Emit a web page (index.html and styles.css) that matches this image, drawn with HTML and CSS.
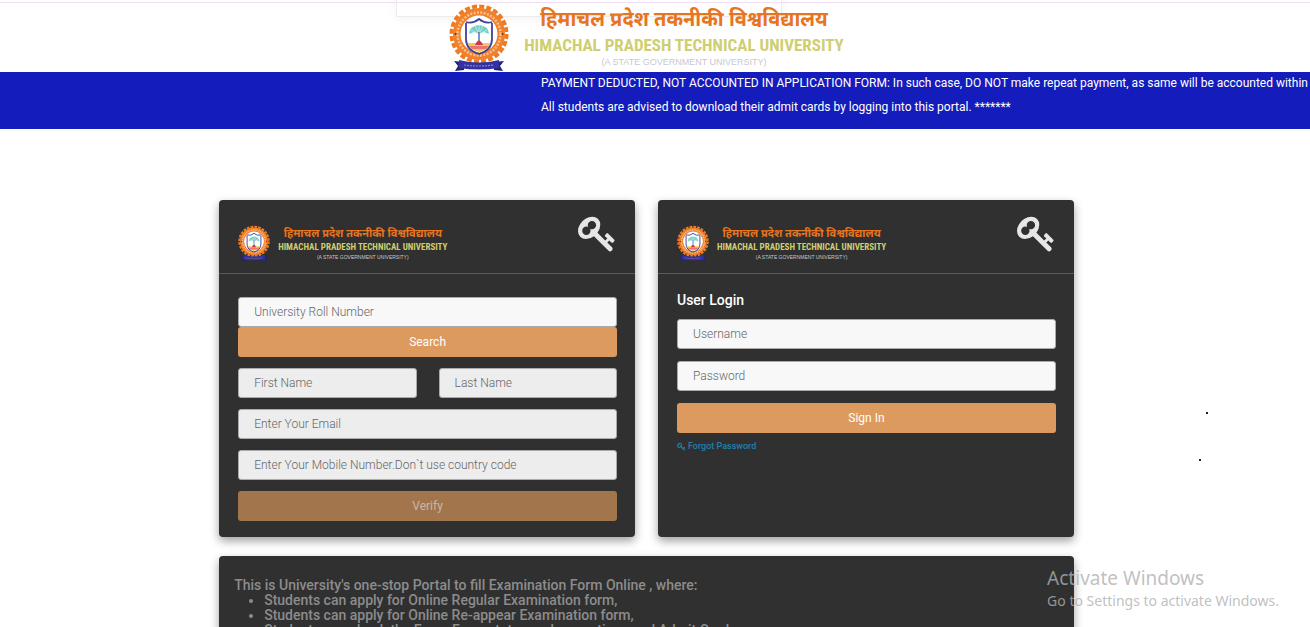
FILE: index.html
```html
<!DOCTYPE html>
<html lang="en">
<head>
<meta charset="utf-8">
<title>Himachal Pradesh Technical University</title>
<link rel="stylesheet" href="styles.css">
</head>
<body>
<svg class="defs" aria-hidden="true">
  <symbol id="seal" viewBox="0 0 60 68">
    <circle cx="30" cy="31" r="27.500" fill="none" stroke="#ef7a22" stroke-width="4" stroke-dasharray="5 2.200"/>
    <circle cx="30" cy="31" r="26" fill="#f0802a"/>
    <circle cx="30" cy="31" r="21.500" fill="none" stroke="#f9c192" stroke-width="2.500" stroke-dasharray="2 1.400"/>
    <circle cx="30" cy="31" r="18.500" fill="#fff"/>
    <circle cx="6.500" cy="31" r="1" fill="#60351a"/><circle cx="53.500" cy="31" r="1" fill="#60351a"/>
    <path d="M18 40h24q-3 7-12 9-9-2-12-9z" fill="#f3c85a"/>
    <path d="M20 43h20l-3 3H23z" fill="#e87570"/>
    <path d="M17 19q7 2 13-3 6 5 13 3M17 20v16q0 11 13 15 13-4 13-15V20" fill="none" stroke="#3e43a0" stroke-width="1.800"/>
    <path d="M20 31q0-8 10-9 10 1 10 9l-5-2-5 2-5-2z" fill="#75cfc6"/>
    <path d="M30 31l-8-4m8 4l-4-8m4 8v-9m0 9l4-8m-4 8l8-4" stroke="#d9f3ee" stroke-width=".7"/>
    <path d="M30 29v9" stroke="#5b70af" stroke-width="1.500"/>
    <path d="M26 42q4-9 8 0z" fill="#ce3943"/>
    <path d="M5 58l10 1v8l-9 1 3-5zM55 58l-10 1v8l9 1-3-5z" fill="#242477"/>
    <path d="M10 57q20 5 40 0v8q-20 3-40 0z" fill="#3432a0"/>
    <path d="M15 62q15 2 30 0" fill="none" stroke="#8684c8" stroke-width="1.200" stroke-dasharray="2 1"/>
  </symbol>
  <symbol id="key" viewBox="0 0 1792 1792">
    <path fill="currentColor" d="M832 512q0-80-56-136t-136-56-136 56-56 136q0 42 19 83-41-19-83-19-80 0-136 56t-56 136 56 136 136 56 136-56 56-136q0-42-19-83 41 19 83 19 80 0 136-56t56-136zm851 704q0 17-49 66t-66 49q-9 0-28.500-16t-36.500-33-38.500-40-24.500-26l-96 96 220 220q28 28 28 68 0 42-39 81t-81 39q-40 0-68-28l-671-671q-176 131-365 131-163 0-265.500-102.500t-102.500-265.500q0-160 95-313t248-248 313-95q163 0 265.500 102.500t102.500 265.500q0 189-131 365l355 355 96-96q-3-3-26-24.500t-40-38.500-33-36.500-16-28.500q0-17 49-66t66-49q13 0 23 10 6 6 46 44.500t82 79.500 86.500 86 73 78 28.500 41z"/>
  </symbol>
</svg>
<div class="ghost"></div>
<header class="masthead">
  <div class="brand">
    <svg class="seal"><use href="#seal"/></svg>
    <div class="names">
      <span class="hindi" lang="hi">हिमाचल प्रदेश तकनीकी विश्वविद्यालय</span>
      <span class="english">HIMACHAL PRADESH TECHNICAL UNIVERSITY</span>
      <span class="sub">(A STATE GOVERNMENT UNIVERSITY)</span>
    </div>
  </div>
</header>
<div class="notice">
  <p>PAYMENT DEDUCTED, NOT ACCOUNTED IN APPLICATION FORM: In such case, DO NOT make repeat payment, as same will be accounted within 12</p>
  <p>All students are advised to download their admit cards by logging into this portal. *******</p>
</div>
<main class="content">
  <div class="cards">
    <section class="card">
      <div class="card-head">
        <div class="brand small">
          <svg class="seal"><use href="#seal"/></svg>
          <div class="names">
            <span class="hindi" lang="hi">हिमाचल प्रदेश तकनीकी विश्वविद्यालय</span>
            <span class="english">HIMACHAL PRADESH TECHNICAL UNIVERSITY</span>
            <span class="sub">(A STATE GOVERNMENT UNIVERSITY)</span>
          </div>
        </div>
        <svg class="key"><use href="#key"/></svg>
      </div>
      <form class="form register">
        <div class="search">
          <input class="field" type="text" aria-label="University Roll Number" placeholder="University Roll Number">
          <button class="btn" type="button">Search</button>
        </div>
        <div class="pair">
          <input class="field" type="text" aria-label="First Name" placeholder="First Name" disabled>
          <input class="field" type="text" aria-label="Last Name" placeholder="Last Name" disabled>
        </div>
        <input class="field" type="email" aria-label="Email" placeholder="Enter Your Email" disabled>
        <input class="field" type="tel" aria-label="Mobile Number" placeholder="Enter Your Mobile Number.Don`t use country code" disabled>
        <button class="btn" type="button" disabled>Verify</button>
      </form>
    </section>
    <section class="card">
      <div class="card-head">
        <div class="brand small">
          <svg class="seal"><use href="#seal"/></svg>
          <div class="names">
            <span class="hindi" lang="hi">हिमाचल प्रदेश तकनीकी विश्वविद्यालय</span>
            <span class="english">HIMACHAL PRADESH TECHNICAL UNIVERSITY</span>
            <span class="sub">(A STATE GOVERNMENT UNIVERSITY)</span>
          </div>
        </div>
        <svg class="key"><use href="#key"/></svg>
      </div>
      <form class="form login">
        <h2>User Login</h2>
        <input class="field" type="text" aria-label="Username" placeholder="Username">
        <input class="field" type="password" aria-label="Password" placeholder="Password">
        <button class="btn" type="button">Sign In</button>
        <a class="forgot" href="#"><svg><use href="#key"/></svg>Forgot Password</a>
      </form>
    </section>
  </div>
  <section class="card about">
    <p>This is University's one-stop Portal to fill Examination Form Online , where:</p>
    <ul>
      <li>Students can apply for Online Regular Examination form,</li>
      <li>Students can apply for Online Re-appear Examination form,</li>
      <li>Students can check the Exam Form status and corrections and Admit Card</li>
    </ul>
  </section>
</main>
<span class="speck one"></span><span class="speck two"></span>
<div class="activate"><span class="title">Activate Windows</span><span>Go to Settings to activate Windows.</span></div>
</body>
</html>
```

FILE: styles.css
```css
* { box-sizing: border-box; }
body {
  margin: 0;
  height: 100vh;
  overflow: hidden;
  position: relative;
  background: #fff;
  font-family: Roboto, sans-serif;
  font-size: 12px;
}
p, h2, ul { margin: 0; }
.defs { position: absolute; width: 0; height: 0; }
.ghost {
  position: absolute;
  left: 396px;
  top: -8px;
  width: 386px;
  height: 25px;
  border: 1px solid #ececf0;
  box-shadow: 0 2px 12px #0000000d;
}
.masthead {
  height: 72px;
  display: flex;
  justify-content: center;
  padding: 1px 17px 0 0;
  border-top: 2px solid #fff;
  box-shadow: inset 0 1px #f3dcf6;
}
.brand { position: relative; display: flex; gap: 15px; }
.seal { width: 60px; height: 68px; flex: none; }
.names {
  display: flex;
  flex-direction: column;
  align-items: center;
  padding-top: 4px;
  white-space: nowrap;
}
.hindi {
  color: #e8741e;
  font: 700 20px/28px "Noto Sans Devanagari", "Noto Sans", sans-serif;
}
.english {
  color: #cfce70;
  font: 700 17px/20px "Roboto Condensed", Roboto, sans-serif;
}
.sub { color: #c8c8cf; font: 9px/14px "Liberation Sans", sans-serif; }
.small { gap: 8px; }
.small .seal { width: 32px; height: 38px; }
.small .names { padding-top: 2px; }
.small .hindi { font-size: 11px; line-height: 16px; }
.small .english { font-size: 9px; line-height: 11px; }
.small .sub { font-size: 5px; line-height: 8px; }
.notice {
  height: 57px;
  overflow: hidden;
  padding-left: 541px;
  background: #141cbc;
  color: #fff;
  white-space: nowrap;
}
.notice p { line-height: 24px; }
.notice p:first-child { line-height: 23px; }
.content {
  width: calc((100% - 17px) * .661);
  margin: 71px auto 0;
  margin-left: calc((100% - 17px) * .1695);
}
.cards { display: grid; grid-template-columns: 1fr 1fr; gap: 23px; }
.card {
  background: #303030;
  border-radius: 4px;
  box-shadow: 0 4px 10px #00000060;
}
.cards .card { min-height: 337px; }
.card-head {
  height: 74px;
  display: flex;
  justify-content: space-between;
  align-items: flex-start;
  padding: 14px 18px 0 19px;
  border-bottom: 1px solid #5a5a5a;
}
.card-head .brand { padding-top: 10px; }
.key { width: 39px; height: 39px; color: #e6e6e6; }
.form { display: flex; flex-direction: column; gap: 11px; padding: 0 18px 0 19px; }
.register { padding-top: 23px; }
.login { padding-top: 17px; gap: 12px; }
.search, .pair { display: grid; }
.pair { grid-template-columns: 1fr 1fr; gap: 22px; }
.field {
  width: 100%;
  min-width: 0;
  height: 30px;
  padding: 0 15px;
  border: 1px solid #aaa;
  border-radius: 3px;
  background: #f8f8f8;
  font: 300 12px Roboto, sans-serif;
}
.field:disabled { background: #ededed; }
.field::placeholder { color: #666; opacity: 1; }
.btn {
  height: 30px;
  border: 0;
  border-radius: 3px;
  background: #dd9a5e;
  color: #fff;
  font: 400 12px Roboto, sans-serif;
}
.btn:disabled { background: #a2754d; color: #c9b7a7; }
h2 { color: #fff; font-size: 14px; font-weight: 500; line-height: 18px; }
.login h2 { margin-bottom: -2px; }
.forgot {
  display: flex;
  align-items: center;
  gap: 2px;
  margin-top: -4px;
  color: #1c82ad;
  font-size: 9px;
  font-weight: 500;
  line-height: 10px;
  text-decoration: none;
}
.forgot svg { width: 9px; height: 9px; }
.about {
  margin-top: 19px;
  padding: 22px 15px;
  color: #8c8c8c;
  font-size: 14px;
  font-weight: 500;
  line-height: 15px;
}
.about ul { padding-left: 30px; }
.speck { position: absolute; width: 2px; height: 2px; background: #222; }
.one { left: 1206px; top: 412px; }
.two { left: 1199px; top: 459px; }
.activate {
  position: absolute;
  right: 31px;
  bottom: 16px;
  display: flex;
  flex-direction: column;
  color: #b0b0b0cc;
  font: 14px/20px "Noto Sans", sans-serif;
}
.activate .title { font-size: 19px; line-height: 26px; }
```
